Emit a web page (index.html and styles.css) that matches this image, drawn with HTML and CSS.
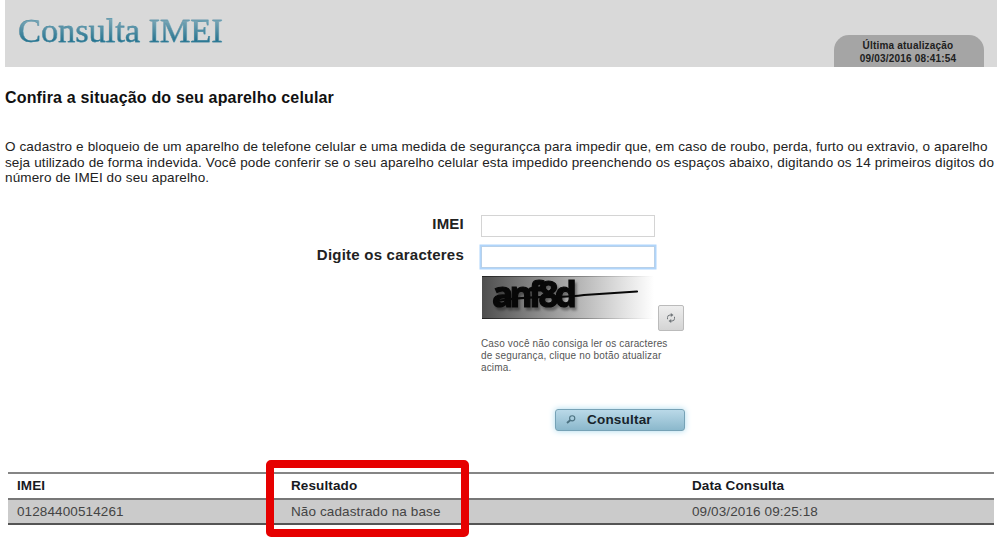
FILE: index.html
```html
<!DOCTYPE html>
<html lang="pt-BR">
<head>
<meta charset="utf-8">
<title>Consulta IMEI</title>
<link rel="stylesheet" href="styles.css">
</head>
<body>
<header class="banner">
  <h1 class="title">Consulta IMEI</h1>
  <div class="updated"><span>Última atualização</span><span>09/03/2016 08:41:54</span></div>
</header>
<main>
  <h2 class="heading">Confira a situação do seu aparelho celular</h2>
  <p class="intro">O cadastro e bloqueio de um aparelho de telefone celular e uma medida de segurançca para impedir que, em caso de roubo, perda, furto ou extravio, o aparelho<br>seja utilizado de forma indevida. Você pode conferir se o seu aparelho celular esta impedido preenchendo os espaços abaixo, digitando os 14 primeiros digitos do<br>número de IMEI do seu aparelho.</p>
  <form class="form">
    <label class="label" for="imei">IMEI</label>
    <input class="field" id="imei" type="text">
    <label class="label" for="code">Digite os caracteres</label>
    <input class="field focused" id="code" type="text">
    <div class="check">
      <div class="captcha-row">
        <svg class="captcha" width="173" height="43" viewBox="0 0 173 43">
          <defs>
            <linearGradient id="shade"><stop offset="0" stop-color="#4e4e4e"/><stop offset=".25" stop-color="#7c7c7c"/><stop offset=".5" stop-color="#aaa"/><stop offset=".8" stop-color="#dedede"/><stop offset="1" stop-color="#fff"/></linearGradient>
            <linearGradient id="edge"><stop offset="0" stop-color="#222"/><stop offset=".6" stop-color="#888"/><stop offset="1" stop-color="#fff"/></linearGradient>
          </defs>
          <rect x="1" width="172" height="43" fill="url(#shade)"/>
          <path d="M1 0H173V1H1ZM1 42H173V43H1Z" fill="url(#edge)"/>
          <text class="captcha-text" x="11" y="31" textLength="85" lengthAdjust="spacing">anf8d</text>
          <path d="M16 25C55 18 80 23 103 19L156 15.500" fill="none" stroke="#080808" stroke-width="2.200" stroke-linecap="round"/>
        </svg>
        <button class="refresh" type="button" aria-label="Atualizar">
          <svg width="10" height="10" viewBox="0 0 10 10" fill="none" stroke="#71767a"><path d="M1.500 6.200V4.500Q1.500 2 4 2H6M8.500 3.800V5.500Q8.500 8 6 8H4"/><path d="M4.800 0 7.500 2 4.800 4ZM5.200 6 2.500 8 5.200 10Z" fill="#71767a" stroke="none"/></svg>
        </button>
      </div>
      <p class="hint">Caso você não consiga ler os caracteres<br>de segurança, clique no botão atualizar<br>acima.</p>
      <button class="submit" type="button">
        <svg width="10" height="9" viewBox="0 0 10 9" fill="none" stroke="#4b707f"><circle cx="6.200" cy="3.300" r="2.600" stroke-width="1.100"/><path d="M4.200 5.200 1 8" stroke-width="1.900"/></svg>
        <span>Consultar</span>
      </button>
    </div>
  </form>
  <div class="results">
    <table class="table">
      <thead><tr><th class="c1">IMEI</th><th class="c2">Resultado</th><th class="c3">Data Consulta</th></tr></thead>
      <tbody><tr><td>01284400514261</td><td>Não cadastrado na base</td><td>09/03/2016 09:25:18</td></tr></tbody>
    </table>
    <div class="highlight"></div>
  </div>
</main>
</body>
</html>
```
FILE: styles.css
```css
* { box-sizing: border-box; }
body { margin: 0; height: 542px; overflow: hidden; background: #fff; color: #111; font-family: "Liberation Sans", Arial, sans-serif; }
main { padding: 0 6px 0 5px; }
.banner { display: flex; justify-content: space-between; align-items: flex-end; height: 67px; margin: 0 3px 0 5px; padding-right: 13px; background: #d9d9d9; }
.title { align-self: flex-start; margin: 10px 0 0 13px; font: 400 34.500px/40px "Liberation Serif", "Times New Roman", serif; letter-spacing: -.1px; color: transparent; background: linear-gradient(#8bb0bd 15%, #24738f 78%); background-clip: text; -webkit-background-clip: text; -webkit-text-stroke: .3px #478ba3; }
.updated { display: flex; flex-direction: column; align-items: center; width: 150px; height: 32px; padding: 4px 2px 0 0; border-radius: 15px 15px 0 0; background: #a5a5a5; font-weight: bold; font-size: 10px; line-height: 13px; letter-spacing: .2px; color: #202020; }
.heading { margin: 21px 0 0; font-size: 16px; line-height: 20px; letter-spacing: .17px; color: #111; }
.intro { margin: 31px 0 0; font-size: 13.500px; line-height: 15.500px; letter-spacing: .122px; color: #222; white-space: nowrap; }
.form { display: grid; grid-template-columns: 459px 1fr; column-gap: 17px; margin: 29px 0 0; }
.label { height: 31px; text-align: right; font-size: 15px; line-height: 18px; font-weight: bold; letter-spacing: .23px; color: #222; }
.field { width: 174px; height: 22px; border: 1px solid #d4d4d4; background: #fff; outline: none; padding: 2px; }
.focused { border-color: #b8d0e8; box-shadow: 0 0 0 1.500px #b0d5fb; }
.check { grid-column: 2; margin-top: -1px; }
.captcha-row { display: flex; gap: 4px; height: 55px; align-items: flex-start; }
.captcha { display: block; overflow: visible; }
.captcha-text { font: bold 35px "Open Sans", sans-serif; fill: #080808; stroke: #080808; stroke-width: 1.200px; filter: drop-shadow(2px 3px 1px rgba(0, 0, 0, .35)); }
.refresh { display: grid; place-items: center; width: 26px; height: 26px; margin-top: 29px; padding: 0; border: 1px solid #bbb; border-radius: 2px; background: linear-gradient(#eee, #d4d4d4); }
.hint { margin: 7px 0 0; font-size: 10px; line-height: 12px; letter-spacing: .15px; color: #555; white-space: nowrap; }
.submit { display: flex; align-items: center; gap: 11px; width: 130px; height: 22px; margin: 35px 0 0 74px; padding: 0 10px 1px; border: 1px solid #76a2b6; border-radius: 3px; background: linear-gradient(#bad9e8, #8bb8cc); box-shadow: 0 0 6px #a9d9ed; font: bold 13.500px "Liberation Sans", Arial, sans-serif; letter-spacing: .2px; color: #17232b; }
.results { position: relative; margin: 41px 0 0 3px; }
.table { width: 986px; table-layout: fixed; border-collapse: separate; border-spacing: 0; text-align: left; font-size: 13.500px; letter-spacing: .11px; }
.table th, .table td { height: 26px; padding: 0 0 0 9px; line-height: 18px; white-space: nowrap; }
.table th { border-top: 2px solid #858585; color: #17191e; }
.table td { height: 27px; padding-top: 1px; border-top: 2px solid #777; border-bottom: 2px solid #555; background: #cbcbcb; color: #444; }
.c1 { width: 274px; }
.c2 { width: 401px; }
.highlight { position: absolute; left: 258px; top: -12px; width: 203px; height: 77px; border: 8px solid #e60000; border-radius: 5px; }
```
